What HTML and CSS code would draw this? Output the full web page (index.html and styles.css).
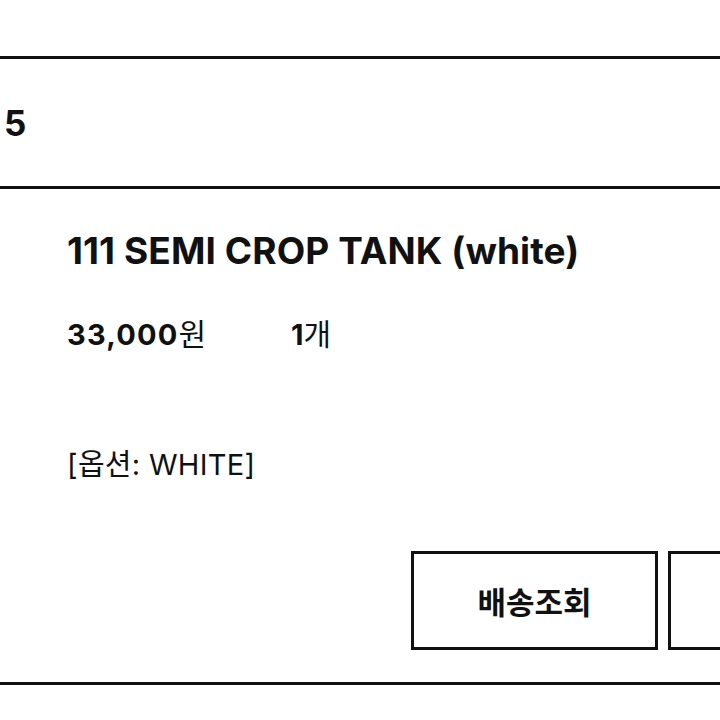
FILE: index.html
```html
<!DOCTYPE html>
<html lang="ko">
<head>
<meta charset="utf-8">
<title>주문 내역</title>
<link rel="stylesheet" href="styles.css">
</head>
<body>
<div class="page">
  <div class="order-date">5</div>
  <section class="order-item">
    <h2 class="item-name">111 SEMI CROP TANK (white)</h2>
    <div class="item-meta">
      <span class="price">33,000<span class="unit">원</span></span>
      <span class="qty">1<span class="unit">개</span></span>
    </div>
    <p class="item-option">[옵션: WHITE]</p>
    <div class="actions">
      <button class="btn">배송조회</button>
      <button class="btn" aria-label="구매확정"></button>
    </div>
  </section>
</div>
</body>
</html>
```
FILE: styles.css
```css
html, body {
  margin: 0;
  padding: 0;
  background: #fff;
  overflow: hidden;
}

body {
  font-family: Inter, "Noto Sans CJK KR", sans-serif;
  color: #111;
}

.page {
  padding-top: 56px;
}

.order-date {
  border-top: 3px solid #111;
  border-bottom: 3px solid #111;
  height: 127px;
  display: flex;
  align-items: center;
  padding-left: 4px;
  font-size: 35px;
  font-weight: 700;
}

.order-item {
  padding-left: 67px;
  border-bottom: 3px solid #111;
  padding-bottom: 32px;
}

.item-name {
  margin: 0;
  padding-top: 38px;
  font-size: 37px;
  line-height: 48px;
  font-weight: 700;
  letter-spacing: 0.1px;
  white-space: nowrap;
}

.item-meta {
  margin-top: 37px;
  display: flex;
  font-size: 29px;
  line-height: 40px;
  font-weight: 700;
}

.price {
  width: 224px;
  letter-spacing: 1.2px;
}

.unit {
  font-family: "Noto Sans CJK KR", sans-serif;
  font-weight: 400;
  font-size: 30px;
  letter-spacing: 0;
}

.item-option {
  margin: 90px 0 0;
  font-size: 29px;
  line-height: 40px;
  font-weight: 400;
  letter-spacing: 0.3px;
}

.actions {
  margin-top: 66px;
  margin-left: 344px;
  display: flex;
  gap: 10px;
}

.btn {
  flex: 0 0 247px;
  height: 99px;
  box-sizing: border-box;
  border: 3px solid #111;
  background: #fff;
  color: #111;
  font-family: "Noto Sans CJK KR", sans-serif;
  font-size: 31px;
  font-weight: 700;
  padding: 0;
}
```
